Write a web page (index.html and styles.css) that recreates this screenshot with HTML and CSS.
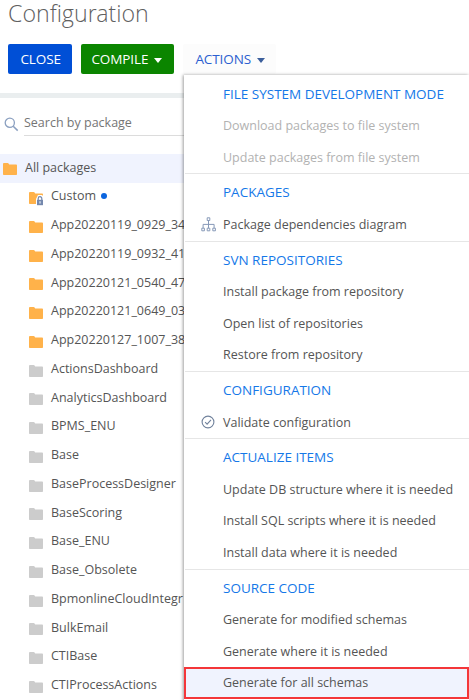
FILE: index.html
```html
<!DOCTYPE html>
<html lang="en">
<head>
<meta charset="utf-8">
<title>Configuration</title>
<link rel="stylesheet" href="styles.css">
</head>
<body>
<svg width="0" height="0" class="defs" aria-hidden="true">
  <symbol id="folder" viewBox="0 0 14 12"><path d="M0 .9Q0 0 .9 0H4.6Q5.3 0 5.6 .6L6.2 1.6H13.2Q14 1.6 14 2.4V11.2Q14 12 13.2 12H.8Q0 12 0 11.2Z" fill="currentColor"/></symbol>
</svg>
<h1 class="title">Configuration</h1>
<div class="toolbar">
  <button class="btn close"><span>CLOSE</span></button>
  <button class="btn compile"><span>COMPILE</span><i class="caret"></i></button>
  <div class="dropdown">
    <button class="btn actions"><span>ACTIONS</span><i class="caret"></i></button>
    <div class="menu">
      <section>
        <h2>FILE SYSTEM DEVELOPMENT MODE</h2>
        <div class="item disabled">Download packages to file system</div>
        <div class="item disabled">Update packages from file system</div>
      </section>
      <section>
        <h2>PACKAGES</h2>
        <div class="item"><svg class="item-icon" width="16" height="15" viewBox="0 0 16 15" fill="none" stroke="#8799b8"><path d="M6.2.8h2.6v2.7H6.2zM.8 11.2h2.6v2.6H.8zM6.2 11.2h2.6v2.6H6.2zM11.8 11.2h2.6v2.6h-2.6zM7.5 3.5v7.7M2.1 11.2V7.4h11v3.8"/></svg>Package dependencies diagram</div>
      </section>
      <section>
        <h2>SVN REPOSITORIES</h2>
        <div class="item">Install package from repository</div>
        <div class="item">Open list of repositories</div>
        <div class="item">Restore from repository</div>
      </section>
      <section>
        <h2>CONFIGURATION</h2>
        <div class="item"><svg class="item-icon" width="14" height="14" viewBox="0 0 14 14" fill="none" stroke="#71829c"><circle cx="7" cy="7" r="5.9" stroke-width="1.1"/><path d="M4.1 7.2l2 2L10 4.9" stroke-width="1.1"/></svg>Validate configuration</div>
      </section>
      <section>
        <h2>ACTUALIZE ITEMS</h2>
        <div class="item">Update DB structure where it is needed</div>
        <div class="item">Install SQL scripts where it is needed</div>
        <div class="item">Install data where it is needed</div>
      </section>
      <section>
        <h2>SOURCE CODE</h2>
        <div class="item">Generate for modified schemas</div>
        <div class="item">Generate where it is needed</div>
        <div class="item highlighted">Generate for all schemas</div>
      </section>
    </div>
  </div>
</div>
<main class="panel">
  <div class="search">
    <svg width="15" height="15" viewBox="0 0 15 15" fill="none" stroke="#8ba0c0"><circle cx="5.8" cy="5.8" r="4.6" stroke-width="1.3"/><path d="M9.2 9.2l4.5 4.4" stroke-width="1.5"/></svg>
    <div class="field">Search by package</div>
  </div>
  <div class="tree">
    <div class="row root"><svg class="folder own"><use href="#folder"/></svg><span>All packages</span></div>
    <div class="row"><span class="locked"><svg class="folder own"><use href="#folder"/></svg><svg class="lock" width="10" height="11" viewBox="0 0 10 11"><path d="M3 0h4l3 3v8H1V4z" fill="#fff"/><path d="M3.2 5V3.5a1.8 1.8 0 0 1 3.6 0V5" fill="none" stroke="#7488ad" stroke-width="1.2"/><path d="M2 4.8h6v5.4H2z" fill="#7488ad"/><path d="M4.5 6.3h1v2.2h-1z" fill="#fff"/></svg></span><span>Custom</span><i class="dot"></i></div>
    <div class="row"><svg class="folder own"><use href="#folder"/></svg><span>App20220119_0929_34</span></div>
    <div class="row"><svg class="folder own"><use href="#folder"/></svg><span>App20220119_0932_41</span></div>
    <div class="row"><svg class="folder own"><use href="#folder"/></svg><span>App20220121_0540_47</span></div>
    <div class="row"><svg class="folder own"><use href="#folder"/></svg><span>App20220121_0649_03</span></div>
    <div class="row"><svg class="folder own"><use href="#folder"/></svg><span>App20220127_1007_38</span></div>
    <div class="row"><svg class="folder"><use href="#folder"/></svg><span>ActionsDashboard</span></div>
    <div class="row"><svg class="folder"><use href="#folder"/></svg><span>AnalyticsDashboard</span></div>
    <div class="row"><svg class="folder"><use href="#folder"/></svg><span>BPMS_ENU</span></div>
    <div class="row"><svg class="folder"><use href="#folder"/></svg><span>Base</span></div>
    <div class="row"><svg class="folder"><use href="#folder"/></svg><span>BaseProcessDesigner</span></div>
    <div class="row"><svg class="folder"><use href="#folder"/></svg><span>BaseScoring</span></div>
    <div class="row"><svg class="folder"><use href="#folder"/></svg><span>Base_ENU</span></div>
    <div class="row"><svg class="folder"><use href="#folder"/></svg><span>Base_Obsolete</span></div>
    <div class="row"><svg class="folder"><use href="#folder"/></svg><span>BpmonlineCloudIntegr</span></div>
    <div class="row"><svg class="folder"><use href="#folder"/></svg><span>BulkEmail</span></div>
    <div class="row"><svg class="folder"><use href="#folder"/></svg><span>CTIBase</span></div>
    <div class="row"><svg class="folder"><use href="#folder"/></svg><span>CTIProcessActions</span></div>
  </div>
</main>
</body>
</html>
```
FILE: styles.css
```css
* { box-sizing: border-box; }
body {
  margin: 0;
  width: 469px;
  height: 700px;
  overflow: hidden;
  background: #fff;
  color: #555;
  font: 12.5px/18px "Open Sans", sans-serif;
}
.defs { position: absolute; }
.title {
  margin: 0;
  height: 44px;
  padding-left: 8px;
  font-family: "Open Sans Light", "Open Sans", sans-serif;
  font-size: 23.2px;
  font-weight: 300;
  line-height: 26px;
  color: #606060;
}
.toolbar {
  display: flex;
  height: 48.5px;
  padding-left: 8.4px;
  gap: 9px;
}
.btn {
  display: flex;
  align-items: center;
  gap: 6px;
  height: 30px;
  margin: 0;
  padding: 0 0 0 10px;
  border: 0;
  border-radius: 2px;
  font: 13.5px/30px "Open Sans", sans-serif;
  letter-spacing: -0.1px;
  color: #fff;
}
.close { width: 64px; padding-left: 12px; background: #004fd6; }
.compile { width: 93px; background: #0b8500; }
.dropdown { position: relative; }
.actions { width: 93px; padding-left: 12px; background: #fcfcfc; color: #2c5fd0; }
.caret {
  width: 0;
  margin-top: 2px;
  border: 4.5px solid transparent;
  border-top: 5px solid currentColor;
  border-bottom: 0;
}
.actions .caret { color: #3c5f9c; }
.menu {
  position: absolute;
  top: 30.7px;
  left: .6px;
  width: 285px;
  height: 640px;
  background: #fff;
  box-shadow: -1px 0 3px rgba(0, 0, 0, .38);
}
section { border-top: 1px solid #e6e6e6; margin-left: 1px; }
section:first-child { border-top-color: transparent; }
h2 {
  height: 34.6px;
  margin: 0;
  padding-left: 38px;
  font-size: 13.5px;
  font-weight: 400;
  line-height: 36px;
  color: #1578e8;
}
.item {
  position: relative;
  height: 31.6px;
  padding-left: 38px;
  line-height: 31.4px;
}
.disabled { color: #b2b2b2; }
.item-icon { position: absolute; left: 16px; top: 8px; }
.highlighted {
  margin-left: -1px;
  padding-left: 37px;
  border: 2px solid #f43639;
  background: #f0f3fe;
  line-height: 27px;
}
.panel { border-top: 5px solid #eaeeef; }
.search { display: flex; align-items: flex-start; height: 56.5px; padding: 0 0 0 4px; }
.search svg { margin-top: 19px; }
.field {
  flex: 1;
  height: 38px;
  margin-left: 5px;
  padding-top: 16px;
  border-bottom: 1px solid #dcdcdc;
  color: #757575;
}
.tree { border-bottom: 1px solid #ddd; }
.row { display: flex; align-items: center; height: 28.76px; padding-left: 29px; }
.row > span:not(.locked) { margin: -1.4px 0 0 8px; }
.root { padding-left: 3px; background: #f0f3fe; }
.folder { display: block; width: 14px; height: 12px; margin-top: 2px; color: #ccc; }
.own { color: #ffb24a; }
.locked { position: relative; }
.lock { position: absolute; left: 6px; top: 5px; }
.dot { width: 6px; height: 6px; margin: -3px 0 0 5px; border-radius: 50%; background: #0b65df; }
```
